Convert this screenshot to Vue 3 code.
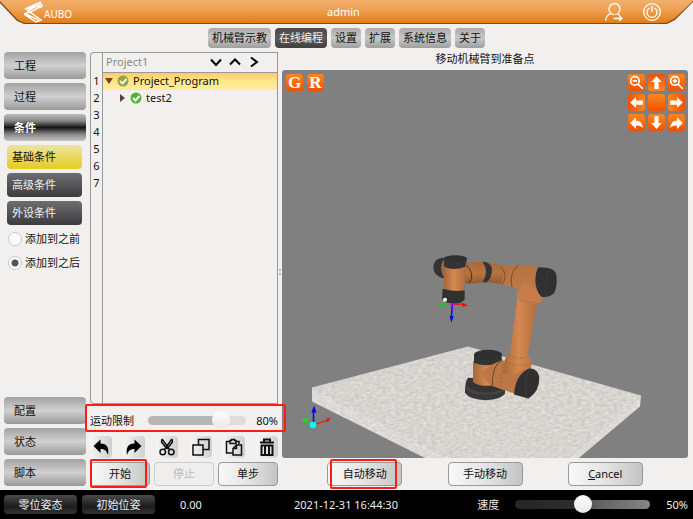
<script setup>
import { ref } from 'vue'

const tabs = ['机械臂示教', '在线编程', '设置', '扩展', '系统信息', '关于']
const activeTab = ref('在线编程')
const sections = ['工程', '过程', '条件']
const activeSection = ref('条件')
const conditions = ['基础条件', '高级条件', '外设条件']
const activeCondition = ref('基础条件')
const lowerSections = ['配置', '状态', '脚本']
const position = ref('after')
const motionLimit = ref(80)
const speed = ref(50)
const lines = [1, 2, 3, 4, 5, 6, 7]

const tools = [
  { name: '撤销', d: 'M1.500 8 8.500 1.500V5.500C14 5.500 17.500 8.500 16 17 14.500 12.500 12.500 11 8.500 11V15Z', fill: true },
  { name: '重做', d: 'M16.500 8 9.500 1.500V5.500C4 5.500 .5 8.500 2 17 3.500 12.500 5.500 11 9.500 11V15Z', fill: true },
  { name: '剪切', d: 'M4 1 12 12M14 1 6 12M4 1 3.500 4 9 11M14 1 14.500 4 9 11M7.500 14A2.700 2.700 0 1 1 2 14 2.700 2.700 0 1 1 7.500 14ZM16 14A2.700 2.700 0 1 1 10.500 14 2.700 2.700 0 1 1 16 14Z' },
  { name: '复制', d: 'M1 7H11V17H1ZM6.500 7V1.500H17V11.500H11' },
  { name: '粘贴', d: 'M8 15H1.500V3.500H5M11 3.500H14V6M5 2.500H6.500V1.500H9.500V2.500H11V5.500H5ZM11.500 7H16.500V17H8V10.500ZM11.500 7V10.500H8' },
  { name: '删除', d: 'M2 4.500H16M6 4V1.500H12V4M3.500 7V17H14.500V7M3 7.500H15M7 8V16M11 8V16', heavy: true }
]

const up = 'M8 2 13 7.500H10V14H6V7.500H3Z'
const curl = 'M2 8.500 7.500 3V6Q13 6 14 13 11 10.500 7.500 11V14Z'
const lens = 'M10.500 6.500A4 4 0 1 1 2.500 6.500 4 4 0 1 1 10.500 6.500ZM9.500 9.500 14 14M4.500 6.500H8.500'
const views = [
  { name: '缩小', d: lens, line: true },
  { name: '上', d: up, side: 'key-up' },
  { name: '放大', d: lens + 'M6.500 4.500V8.500', line: true },
  { name: '左', d: up, turn: 'rotate(-90 8 8)', side: 'key-left' },
  { name: '复位', d: '' },
  { name: '右', d: up, turn: 'rotate(90 8 8)', side: 'key-right' },
  { name: '左旋', d: curl },
  { name: '下', d: up, turn: 'rotate(180 8 8)' },
  { name: '右旋', d: curl, turn: 'translate(16 0) scale(-1 1)' }
]
</script>

<template>
  <div class="app">
    <header class="top">
      <div class="top-fill">
        <div class="brand">
          <svg width="20" height="22" viewBox="1 0 20 22" fill="none" stroke="#fff" stroke-width="1.500" aria-hidden="true">
            <path d="M2 8 17 1.500 19 5 7 11 18 19 13 21 1 13 9 10M4 10 18 3M3 8 14 5 19 6M3 13 15 19M7 10 3 13" />
          </svg>
          <span>AUBO</span>
        </div>
        <span class="user">admin</span>
        <div class="account">
          <button class="bare" aria-label="切换用户">
            <svg width="20" height="20" viewBox="0 0 20 20" fill="none" stroke="#fff" stroke-width="1.300">
              <path d="M10 12.500A5.500 5.500 0 1 1 11 12.500M7 11.500Q2 13 1.500 19M13 11.500 16 13.500M9.500 16.500H18M15 13.500 18 16.500 15 19" />
            </svg>
          </button>
          <button class="bare" aria-label="关机">
            <svg width="20" height="20" viewBox="0 0 20 20" fill="none" stroke="#fff" stroke-width="1.300">
              <circle cx="10" cy="10" r="8.300" />
              <path d="M7.500 6A5 5 0 1 0 12.500 6M10 4V10" />
            </svg>
          </button>
        </div>
      </div>
    </header>

    <nav class="tabs">
      <button v-for="t in tabs" :key="t" :class="{ on: t === activeTab }" @click="activeTab = t">{{ t }}</button>
    </nav>

    <main class="body">
      <aside class="side">
        <button v-for="s in sections" :key="s" class="metal" :class="{ on: s === activeSection }" @click="activeSection = s">{{ s }}</button>
        <div class="subs">
          <button v-for="c in conditions" :key="c" class="sub" :class="{ on: c === activeCondition }" @click="activeCondition = c">{{ c }}</button>
          <label class="choice"><input v-model="position" type="radio" name="position" value="before" />添加到之前</label>
          <label class="choice"><input v-model="position" type="radio" name="position" value="after" />添加到之后</label>
        </div>
        <div class="spacer"></div>
        <button v-for="s in lowerSections" :key="s" class="metal" @click="activeSection = s">{{ s }}</button>
      </aside>

      <section class="program">
        <div class="editor">
          <div class="gutter"><span v-for="n in lines" :key="n">{{ n }}</span></div>
          <div class="tree">
            <div class="tree-head">
              <span>Project1</span>
              <button class="bare" aria-label="向下"><svg width="12" height="12" viewBox="0 0 12 12"><path d="M1 3.500 6 9 11 3.500" /></svg></button>
              <button class="bare" aria-label="向上"><svg width="12" height="12" viewBox="0 0 12 12"><path d="M1 8.500 6 3.500 11 8.500" /></svg></button>
              <button class="bare" aria-label="向右"><svg width="12" height="12" viewBox="0 0 12 12"><path d="M3 1.500 9 6 3 10.500" /></svg></button>
            </div>
            <div class="row picked">
              <svg width="8" height="8" viewBox="0 0 8 8"><path d="M0 1H8L4 7Z" fill="#70452c" /></svg>
              <svg width="12" height="12" viewBox="0 0 12 12"><circle cx="6" cy="6" r="5.500" fill="#93a53c" /><path d="M3 6 5.500 8.500 9.500 4" fill="none" stroke="#f5f3df" stroke-width="2" /></svg>
              <span>Project_Program</span>
            </div>
            <div class="row child">
              <svg width="8" height="8" viewBox="0 0 8 8"><path d="M2 0 7 4 2 8Z" fill="#5c4040" /></svg>
              <svg width="12" height="12" viewBox="0 0 12 12"><circle cx="6" cy="6" r="5.500" fill="#4fb62b" /><path d="M3 6 5.500 8.500 9.500 4" fill="none" stroke="#fff" stroke-width="2" /></svg>
              <span>test2</span>
            </div>
          </div>
        </div>
        <div class="limit">
          <label for="limit">运动限制</label>
          <input id="limit" v-model="motionLimit" type="range" min="0" max="100" />
          <output for="limit">{{ motionLimit }}%</output>
          <i class="mark mark-limit"></i>
        </div>
        <div class="tools">
          <button v-for="t in tools" :key="t.name" :aria-label="t.name">
            <svg width="18" height="18" viewBox="0 0 18 18" :fill="t.fill ? '#000' : 'none'" :stroke="t.fill ? 'none' : '#111'" :stroke-width="t.heavy ? 2 : 1.5"><path :d="t.d" /></svg>
          </button>
        </div>
        <div class="run">
          <div class="slot"><button class="plain">开始</button><i class="mark mark-start"></i></div>
          <div class="slot"><button class="plain" disabled>停止</button></div>
          <div class="slot"><button class="plain">单步</button></div>
        </div>
      </section>

      <section class="view">
        <h1>移动机械臂到准备点</h1>
        <div class="viewport">
          <svg class="scene" viewBox="282 70 406 389" preserveAspectRatio="xMidYMid slice" role="img" aria-label="机械臂">
            <defs>
              <filter id="stone" x="0" y="0" width="100%" height="100%" color-interpolation-filters="sRGB">
                <feTurbulence type="fractalNoise" baseFrequency="0.22 0.4" numOctaves="3" seed="4" />
                <feColorMatrix values="0.16 0 0 0 0.765  0.16 0 0 0 0.75  0.16 0 0 0 0.735  0 0 0 0 1" />
                <feComposite in2="SourceGraphic" operator="in" />
              </filter>
              <linearGradient id="limb" x1="0" x2="1"><stop offset="0" stop-color="#a5673a" /><stop offset=".45" stop-color="#d58850" /><stop offset="1" stop-color="#b06c3e" /></linearGradient>
              <linearGradient id="arm" x1="0" y1="0" x2="0" y2="1"><stop offset="0" stop-color="#a8683b" /><stop offset=".5" stop-color="#b8733f" /><stop offset="1" stop-color="#8d5630" /></linearGradient>
              <linearGradient id="elbow" x1="0" y1="0" x2=".2" y2="1"><stop offset="0" stop-color="#b26f40" /><stop offset="1" stop-color="#c87e4b" /></linearGradient>
            </defs>
            <g filter="url(#stone)"><path d="M312 388 468 347 641 396 640 407 577 460H428L312 402Z" fill="#d8d4d0" /></g>
            <path d="M312 389V402L428 460H448Z" fill="#fff" opacity=".14" />
            <path d="M641 397 640 407 577 460H567Z" fill="#fff" opacity=".14" />

            <g transform="translate(400 240) scale(.3333)">
              <path d="M204 415 Q194 430 195 460 Q210 482 257 482 Q304 480 315 462V440Z" fill="#383838" />
              <ellipse cx="258" cy="447" rx="60" ry="19" fill="#444" />
              <path d="M204 415V442Q225 460 258 459 300 458 308 444V420Z" fill="#343434" />
              <path d="M219 365V428Q240 442 276 438L310 400 306 355Z" fill="url(#limb)" />
              <path d="M222 345V370Q250 382 282 374L305 362V345Z" fill="#333" />
              <ellipse cx="264" cy="346" rx="42" ry="15" fill="#303030" />
              <path d="M246 402 Q262 376 308 362L390 386 345 463 278 440Q256 424 246 402Z" fill="#bd7645" />
              <path d="M305 364Q276 376 277 438" fill="none" stroke="#39302a" stroke-width="2" />
              <path d="M312 372Q298 405 305 442" fill="none" stroke="#7a4b2b" stroke-width="2" stroke-dasharray="4 7" />
              <path d="M352 178 329 345Q314 350 314 367L308 402Q340 416 368 390L394 386V368Q394 354 382 350L414 180Z" fill="url(#limb)" />
              <path d="M329 345Q352 362 382 352M316 364Q350 386 392 372" fill="none" stroke="#98602f" stroke-width="2" stroke-dasharray="6 5" />
              <path d="M389 386Q414 388 418 412 419 456 386 477L342 465Q346 404 389 386Z" fill="#303030" />
              <path d="M389 386Q371 418 379 477" fill="none" stroke="#3c3c3c" stroke-width="3" />

              <path d="M126 55Q102 57 100 85 102 110 130 116L143 106V60Z" fill="#333" />
              <path d="M130 62Q116 84 130 112L148 107V60Z" fill="#a66538" />
              <path d="M194 70 252 67 330 82 325 136 262 128 196 133Z" fill="url(#arm)" />
              <path d="M248 67Q272 68 276 88 276 118 260 128L248 128Q268 96 248 67Z" fill="#343434" />
              <path d="M200 78Q226 102 208 132" fill="none" stroke="#4c3423" stroke-width="3" />
              <path d="M215 76Q231 102 220 128" fill="none" stroke="#d28b55" stroke-width="2" stroke-dasharray="4 4" />
              <path d="M302 82 342 75 410 80 414 160 428 180Q424 193 395 193 357 188 349 174L352 148 330 141 302 132Q320 108 302 82Z" fill="url(#elbow)" />
              <path d="M354 76Q326 105 336 143M304 84Q327 110 306 134" fill="none" stroke="#553824" stroke-width="2" />
              <path d="M375 126Q363 148 350 165Q382 188 428 177Z" fill="#c87d49" />
              <path d="M359 182Q384 193 414 186" fill="none" stroke="#8f572f" stroke-width="2" stroke-dasharray="6 5" />
              <path d="M415 83 Q462 82 468 103 474 132 464 158 454 174 424 172 406 152 406 122 407 96 415 83Z" fill="#303030" />
              <path d="M448 86Q434 110 437 172" fill="none" stroke="#383838" stroke-width="3" />
              <path d="M132 78V157Q160 164 192 156L197 80Z" fill="url(#limb)" />
              <path d="M132 60V82Q162 95 196 82L201 58Z" fill="#343434" />
              <ellipse cx="166" cy="57" rx="35" ry="10" fill="#303030" />
              <path d="M128 148Q160 158 194 152V180Q184 193 158 193 132 190 126 178Z" fill="#303030" />
              <circle cx="135" cy="181" r="6" fill="#fff" />
              <path d="M157 193H140" stroke="#0d0" stroke-width="4" /><path d="M116 194 138 187V200Z" fill="#0d0" />
              <path d="M157 194H190" stroke="#f00" stroke-width="4" /><path d="M204 198 187 190V202Z" fill="#f00" />
              <path d="M157 196 154 236" stroke="#00f" stroke-width="4" /><path d="M154 250 149 230H161Z" fill="#00f" />
              <path d="M150 193 164 195" stroke="#d0d" stroke-width="5" />
            </g>

            <path d="M313.500 424V412" stroke="#00f" stroke-width="1.500" /><path d="M314 406 311.500 413H316.500Z" fill="#00f" />
            <path d="M315 425 327 421" stroke="#e11" stroke-width="1.300" /><path d="M331 419 326 419 327.500 423Z" fill="#e11" />
            <path d="M313 425 305 421" stroke="#0e0" stroke-width="1.300" /><path d="M302 419 308 419 305 423.500Z" fill="#0e0" />
            <circle cx="313" cy="425.500" r="3.200" fill="#0ff" />
          </svg>
          <div class="modes"><button class="key">G</button><button class="key">R</button></div>
          <div class="pad">
            <button v-for="v in views" :key="v.name" class="key" :class="v.side" :aria-label="v.name">
              <svg width="17" height="17" viewBox="0 0 16 16" :fill="v.line ? 'none' : '#fff'" :stroke="v.line ? '#fff' : 'none'" stroke-width="1.500"><path :d="v.d" :transform="v.turn" /></svg>
            </button>
          </div>
        </div>
        <div class="moves">
          <div class="slot"><button class="plain">自动移动</button><i class="mark mark-auto"></i></div>
          <div class="slot"><button class="plain">手动移动</button></div>
          <div class="slot"><button class="plain"><u>C</u>ancel</button></div>
        </div>
      </section>
    </main>

    <footer class="status">
      <div class="poses">
        <button>零位姿态</button>
        <button>初始位姿</button>
        <span>0.00</span>
      </div>
      <time datetime="2021-12-31T16:44:30">2021-12-31 16:44:30</time>
      <div class="speed">
        <label for="speed">速度</label>
        <input id="speed" v-model="speed" type="range" min="0" max="100" />
        <output for="speed">{{ speed }}%</output>
      </div>
    </footer>
  </div>
</template>

<style>
body {
  margin: 0;
  background: #f1f0ee;
}
</style>

<style scoped>
* {
  box-sizing: border-box;
}
.app {
  min-height: 100vh;
  display: flex;
  flex-direction: column;
  font-family: "Noto Sans", "Noto Sans CJK SC", sans-serif;
  font-size: 11px;
  line-height: 16px;
  color: #111;
}
button {
  margin: 0;
  padding: 0;
  border: 0;
  font: inherit;
  color: inherit;
  cursor: pointer;
}
svg {
  display: block;
  flex: none;
}
.bare {
  background: none;
}
.top {
  background: #7c4a1c;
  clip-path: polygon(0 0, 100% 0, 100% 2px, calc(100% - 18px) 20px, calc(100% - 26px) 24px, 24px 24px, 17px 21px, 0 3px);
}
.top-fill {
  height: 23px;
  margin-bottom: 1px;
  padding: 0 31px 0 24px;
  display: grid;
  grid-template-columns: 1fr auto 1fr;
  align-items: center;
  background: linear-gradient(#f2b06d, #ee9f50 45%, #e17d18);
  clip-path: polygon(0 0, 100% 0, 100% 1px, calc(100% - 19px) 19px, calc(100% - 27px) 23px, 25px 23px, 18px 20px, 0 1px);
  color: #fff;
}
.brand {
  display: flex;
  align-items: center;
  font-size: 10px;
}
.brand span {
  padding-top: 4px;
}
.user {
  padding-left: 1px;
}
.account {
  display: flex;
  justify-content: flex-end;
  gap: 18px;
}
.tabs {
  display: flex;
  justify-content: center;
  gap: 4px;
  padding: 4px 0;
}
.tabs button {
  height: 20px;
  padding: 0 4px;
  border-radius: 4px;
  background: linear-gradient(#acacac, #c6c6c6 50%, #9f9f9f);
}
.tabs .on {
  background: linear-gradient(#4a4a4a, #5a5a5a 50%, #404040);
  color: #eee;
}
.body {
  flex: 1;
  display: grid;
  grid-template-columns: 82px 188px 1fr;
  gap: 4px;
  padding: 0 5px 4px 4px;
}
.side {
  display: flex;
  flex-direction: column;
  gap: 4px;
}
.metal {
  height: 27px;
  padding-left: 10px;
  border-radius: 4px;
  background: linear-gradient(#a2a2a2, #d0d0d0 50%, #9a9a9a);
  text-align: left;
}
.metal.on {
  background: linear-gradient(#bcbcbc, #888 25%, #141414 50%, #888 75%, #c4c4c4);
  color: #fff;
  font-weight: bold;
}
.subs {
  display: flex;
  flex-direction: column;
  gap: 4px;
  padding: 0 4px 0 3px;
}
.sub {
  height: 24px;
  padding-left: 5px;
  border-radius: 4px;
  background: linear-gradient(#6e6e70, #3c3a3c);
  color: #eee;
  text-align: left;
}
.sub.on {
  background: linear-gradient(#ebe4a4, #e5cc20);
  color: #111;
}
.choice {
  height: 20px;
  display: flex;
  align-items: center;
  gap: 3px;
  white-space: nowrap;
}
.choice input {
  appearance: none;
  width: 14px;
  height: 14px;
  margin: 0 0 0 1px;
  border: 1px solid #ccc;
  border-radius: 50%;
  background: #fafafa;
}
.choice input:checked {
  background: radial-gradient(circle, #555 3px, #fafafa 4px);
}
.spacer {
  flex: 1;
}
.program {
  position: relative;
  z-index: 1;
  display: flex;
  flex-direction: column;
}
.editor {
  flex: 1;
  display: flex;
}
.gutter {
  width: 12px;
  padding-top: 19px;
  display: flex;
  flex-direction: column;
  border: 1px solid #999;
  border-width: 1px 0 1px 1px;
  border-radius: 4px 0 0 4px;
  line-height: 17px;
  text-align: center;
}
.tree {
  flex: 1;
  border: 1px solid #999;
}
.tree-head {
  height: 20px;
  display: flex;
  align-items: center;
  gap: 7px;
  padding: 0 17px 1px 3px;
  border-bottom: 1px solid #999;
  color: #888;
}
.tree-head span {
  flex: 1;
}
.tree-head path {
  fill: none;
  stroke: #000;
  stroke-width: 2;
}
.row {
  height: 17px;
  display: flex;
  align-items: center;
  gap: 4px;
  padding: 0 0 2px 2px;
}
.row.picked {
  background: linear-gradient(#ffc96b, #ffe78c 50%, #ffec9c);
}
.row.child {
  padding-left: 15px;
}
.limit {
  position: relative;
  height: 28px;
  display: flex;
  align-items: center;
  gap: 14px;
  padding-top: 5px;
}
.limit input {
  flex: 1;
  min-width: 0;
}
.limit output {
  margin-left: -4px;
}
input[type="range"] {
  appearance: none;
  height: 18px;
  margin: 0;
  background: none;
}
input[type="range"]::-webkit-slider-runnable-track {
  height: 9px;
  border-radius: 5px;
  background: linear-gradient(90deg, #b6b6b6 75%, #dedddb 75%);
}
input[type="range"]::-webkit-slider-thumb {
  appearance: none;
  width: 18px;
  height: 18px;
  margin-top: -5px;
  border-radius: 50%;
  background: linear-gradient(#fdfdfd, #e9e9e9);
}
.mark {
  position: absolute;
  border: 2px solid #fb1d12;
  border-radius: 2px;
  pointer-events: none;
}
.mark-limit {
  inset: 0 -8px 0 -5px;
}
.mark-start {
  inset: -3px 3px -2px 0;
}
.mark-auto {
  inset: -3px 5px -3px 3px;
}
.tools {
  display: flex;
  justify-content: space-between;
  padding: 4px 0;
}
.tools button {
  width: 22px;
  height: 22px;
  display: grid;
  place-items: center;
  border-radius: 4px;
  background: linear-gradient(90deg, #f5f5f4, #cfcfcf);
}
.run {
  display: grid;
  grid-template-columns: repeat(3, 1fr);
  gap: 4px;
}
.slot {
  position: relative;
  display: grid;
}
.plain {
  height: 24px;
  border: 1px solid #999;
  border-radius: 4px;
  background: linear-gradient(90deg, #f8f8f8, #e4e4e4 50%, #c4c4c4);
}
.plain:disabled {
  border-color: #ccc;
  background: #efeeec;
  color: #bbb;
}
.view {
  position: relative;
  display: flex;
  flex-direction: column;
}
/* Grip of the splitter between the program list and the 3D view */
.view::before {
  content: "";
  position: absolute;
  left: -3px;
  top: 50%;
  height: 6px;
  border-left: 2px dotted #bbb;
}
.view h1 {
  margin: 0;
  font-size: 11px;
  font-weight: normal;
  line-height: 14px;
  padding-bottom: 4px;
  text-align: center;
}
.viewport {
  position: relative;
  flex: 1;
  border-radius: 3px;
  background: #808080;
  overflow: hidden;
}
.scene {
  position: absolute;
  inset: 0;
  width: 100%;
  height: 100%;
}
.modes {
  position: absolute;
  top: 4px;
  left: 4px;
  display: flex;
  gap: 4px;
}
.pad {
  position: absolute;
  top: 4px;
  right: 3px;
  display: grid;
  grid-template-columns: repeat(3, 17px);
  gap: 3px;
}
.key {
  width: 17px;
  height: 17px;
  border-radius: 3px;
  background: linear-gradient(#fd8620, #ec5204);
  color: #fff;
  font: bold 17px/17px "Liberation Serif", serif;
}
.key-up {
  background: linear-gradient(#ec5204, #fd8620);
}
.key-left {
  background: linear-gradient(90deg, #ec5204, #fd8620);
}
.key-right {
  background: linear-gradient(270deg, #ec5204, #fd8620);
}
.moves {
  display: flex;
  justify-content: space-evenly;
  padding-top: 4px;
}
.moves .slot {
  width: 75px;
}
.status {
  height: 29px;
  display: grid;
  grid-template-columns: 1fr auto 1fr;
  align-items: center;
  padding: 0 5px 0 4px;
  background: #000;
  color: #eee;
}
.poses {
  display: flex;
  align-items: center;
  gap: 5px;
}
.poses button {
  width: 73px;
  height: 19px;
  border-radius: 4px;
  background: linear-gradient(#4a4a4a, #1c1c1c 60%, #333);
}
.poses span {
  padding-left: 20px;
}
.speed {
  display: flex;
  align-items: center;
  justify-content: flex-end;
  gap: 16px;
}
.speed input {
  width: 135px;
}
.speed input::-webkit-slider-runnable-track {
  background: linear-gradient(90deg, #252525, #2e2e2e 45%, #606060 60%, #858585);
}
</style>
